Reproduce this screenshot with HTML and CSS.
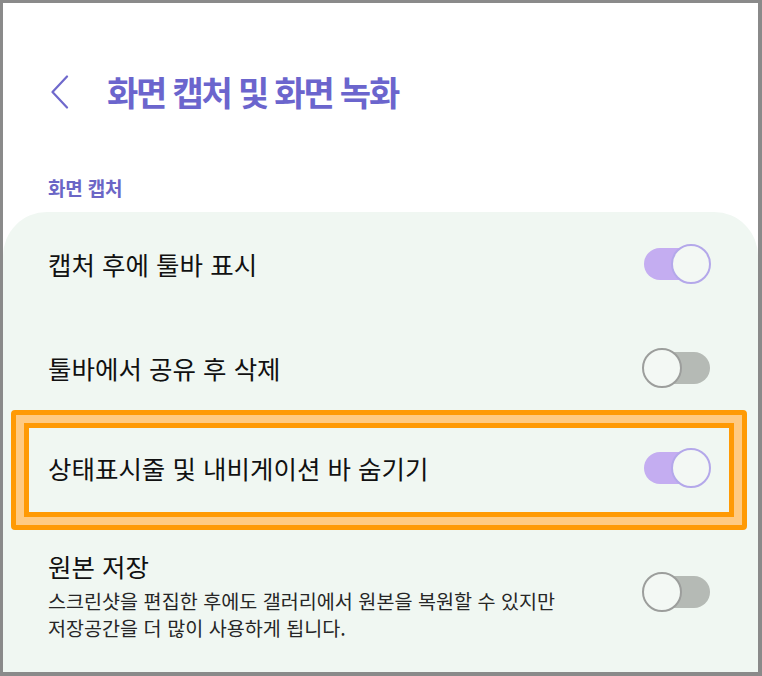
FILE: index.html
```html
<!DOCTYPE html>
<html lang="ko">
<head>
<meta charset="utf-8">
<title>화면 캡처 및 화면 녹화</title>
<link rel="stylesheet" href="styles.css">
</head>
<body>
<div class="frame">
  <header class="topbar">
    <svg class="back" width="20" height="34" viewBox="0 0 20 34" aria-hidden="true">
      <polyline points="17,1.5 2.5,17 17,32.5" fill="none" stroke="#6f69cc" stroke-width="2.2" stroke-linecap="round" stroke-linejoin="round"/>
    </svg>
    <h1 class="title">화면 캡처 및 화면 녹화</h1>
  </header>
  <div class="section-label">화면 캡처</div>
  <main class="card">
    <div class="row row-a">
      <span class="label">캡처 후에 툴바 표시</span>
      <span class="toggle on"><span class="track"></span><span class="thumb"></span></span>
    </div>
    <div class="row row-a">
      <span class="label">툴바에서 공유 후 삭제</span>
      <span class="toggle off"><span class="track"></span><span class="thumb"></span></span>
    </div>
    <div class="row row-b">
      <span class="label">상태표시줄 및 내비게이션 바 숨기기</span>
      <span class="toggle on"><span class="track"></span><span class="thumb"></span></span>
      <div class="highlight"><div class="highlight-inner"></div></div>
    </div>
    <div class="row row-c">
      <div class="text">
        <div class="label">원본 저장</div>
        <div class="desc">스크린샷을 편집한 후에도 갤러리에서 원본을 복원할 수 있지만<br>저장공간을 더 많이 사용하게 됩니다.</div>
      </div>
      <span class="toggle off"><span class="track"></span><span class="thumb"></span></span>
    </div>
  </main>
</div>
</body>
</html>
```
FILE: styles.css
```css
* { box-sizing: border-box; }
html, body { margin: 0; padding: 0; }
body {
  font-family: "Noto Sans CJK KR", "Noto Sans", sans-serif;
  background: #ffffff;
}
.frame {
  width: 762px;
  height: 676px;
  border: 3px solid #8a8a8a;
  border-bottom-width: 4px;
  border-right-width: 4px;
  background: #ffffff;
  overflow: hidden;
  display: flex;
  flex-direction: column;
}
.topbar {
  display: flex;
  align-items: center;
  margin-top: 69px;
  height: 40px;
  padding-left: 47px;
}
.back { display: block; flex: none; }
.title {
  margin: 0 0 0 37px;
  font-size: 34px;
  line-height: 40px;
  font-weight: 700;
  color: #6b65cd;
  letter-spacing: -2.2px;
}
.section-label {
  margin-top: 64px;
  padding-left: 45px;
  font-size: 19px;
  line-height: 24px;
  font-weight: 700;
  color: #6b66c6;
  letter-spacing: -0.2px;
}
.card {
  margin-top: 12px;
  flex: 1;
  background: #f0f7f2;
  border-radius: 44px 44px 0 0;
}
.row {
  position: relative;
  display: flex;
  align-items: center;
  justify-content: space-between;
  padding: 0 47px 0 45px;
}
.row-a { height: 104px; }
.row-b { height: 96px; }
.row-c { padding-top: 35px; align-items: flex-start; }
.row-c .toggle { margin-top: 21px; }
.label {
  font-size: 25.5px;
  line-height: 30px;
  color: #111111;
}
.desc {
  margin-top: 6px;
  font-size: 19.6px;
  line-height: 27px;
  color: #262626;
}
.toggle {
  position: relative;
  display: block;
  flex: none;
  width: 69px;
  height: 40px;
}
.track {
  position: absolute;
  left: 2px;
  right: 1px;
  top: 4px;
  height: 32px;
  border-radius: 16px;
}
.thumb {
  position: absolute;
  top: 0;
  width: 40px;
  height: 40px;
  border-radius: 50%;
  background: #f3f8f4;
}
.on .track { background: #c4adf1; }
.on .thumb { right: 0; border: 2px solid #b4a8ea; }
.off .track { background: #b5bab5; }
.off .thumb { left: 0; border: 2px solid #9c9e9c; }
.highlight {
  position: absolute;
  left: 8px;
  top: -10px;
  width: 736px;
  height: 120px;
  border: 5px solid #ff9a05;
  border-radius: 4px;
  box-shadow: inset 0 0 0 8px #ffca82;
  padding: 8px;
  pointer-events: none;
}
.highlight-inner {
  width: 100%;
  height: 100%;
  border: 5px solid #ff9a05;
}
```
